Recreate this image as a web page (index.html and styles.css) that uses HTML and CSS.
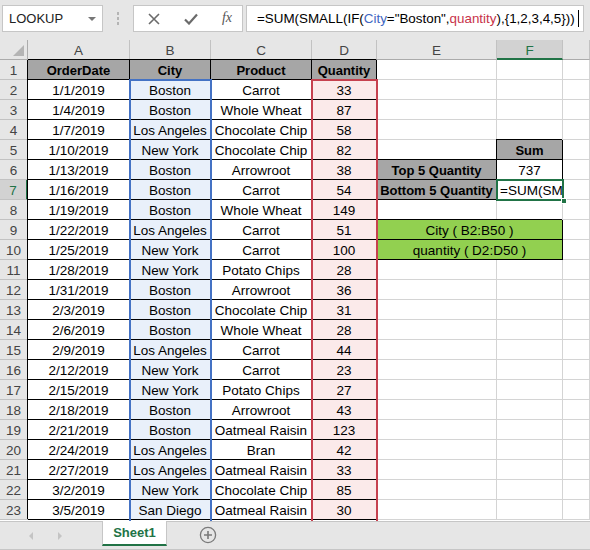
FILE: index.html
```html
<!DOCTYPE html>
<html>
<head>
<meta charset="utf-8">
<link rel="stylesheet" href="styles.css">
</head>
<body>
<div class="app">
  <div class="fbar">
    <div class="namebox"><span>LOOKUP</span><span class="dd"></span></div>
    <div class="dots"><i></i><i></i><i></i></div>
    <div class="btns">
      <svg width="12" height="12" viewBox="0 0 12 12"><path d="M1 1L11 11M11 1L1 11" stroke="#6b6b6b" stroke-width="1.6" fill="none"/></svg>
      <svg width="14" height="12" viewBox="0 0 14 12"><path d="M1 6.5L5 10.5L13 1.5" stroke="#6b6b6b" stroke-width="2.2" fill="none"/></svg>
      <span class="fx">fx</span>
    </div>
    <div class="finput">=SUM(SMALL(IF(<span class="rb">City</span>="Boston",<span class="rr">quantity</span>),{1,2,3,4,5}))<span class="caret"></span></div>
  </div>
  <div class="sheet">
    <div class="grid" id="grid"></div>
    <div class="rng blue"></div>
    <div class="rng red"></div>
    <div class="active"><span class="handle"></span></div>
  </div>
  <div class="tabs">
    <span class="arr l"></span><span class="arr r"></span>
    <div class="tab">Sheet1</div>
    <div class="plus"><svg width="18" height="18" viewBox="0 0 18 18"><circle cx="9" cy="9" r="7.6" fill="none" stroke="#7a7a7a" stroke-width="1.3"/><path d="M9 5V13M5 9H13" stroke="#7a7a7a" stroke-width="1.6"/></svg></div>
  </div>
</div>
<script src="app.js"></script>
</body>
</html>
```
FILE: app.js
```js
var data = [
["1/1/2019","Boston","Carrot","33"],
["1/4/2019","Boston","Whole Wheat","87"],
["1/7/2019","Los Angeles","Chocolate Chip","58"],
["1/10/2019","New York","Chocolate Chip","82"],
["1/13/2019","Boston","Arrowroot","38"],
["1/16/2019","Boston","Carrot","54"],
["1/19/2019","Boston","Whole Wheat","149"],
["1/22/2019","Los Angeles","Carrot","51"],
["1/25/2019","New York","Carrot","100"],
["1/28/2019","New York","Potato Chips","28"],
["1/31/2019","Boston","Arrowroot","36"],
["2/3/2019","Boston","Chocolate Chip","31"],
["2/6/2019","Boston","Whole Wheat","28"],
["2/9/2019","Los Angeles","Carrot","44"],
["2/12/2019","New York","Carrot","23"],
["2/15/2019","New York","Potato Chips","27"],
["2/18/2019","Boston","Arrowroot","43"],
["2/21/2019","Boston","Oatmeal Raisin","123"],
["2/24/2019","Los Angeles","Bran","42"],
["2/27/2019","Los Angeles","Oatmeal Raisin","33"],
["3/2/2019","New York","Chocolate Chip","85"],
["3/5/2019","San Diego","Oatmeal Raisin","30"]
];
var g = document.getElementById('grid');
function cell(txt, cls) {
  var d = document.createElement('div');
  d.className = 'c ' + (cls || '');
  d.textContent = txt || '';
  g.appendChild(d);
  return d;
}
cell('', 'corner');
['A','B','C','D','E','F',''].forEach(function (l, i) {
  cell(l, 'ch' + (i < 4 ? ' chb' : '') + (l === 'F' ? ' sel' : ''));
});
var extras = {
  5: [['', ''], ['Sum', 'b hd']],
  6: [['Top 5 Quantity', 'b hd'], ['737', 'b']],
  7: [['Bottom 5 Quantity', 'b hd'], ['=SUM(SM', 'b left']],
  9: [['City ( B2:B50 )', 'b grn span2']],
  10: [['quantity ( D2:D50 )', 'b grn span2']]
};
for (var r = 1; r <= 23; r++) {
  cell(String(r), 'rh' + (r === 7 ? ' sel' : ''));
  if (r === 1) {
    ['OrderDate','City','Product','Quantity'].forEach(function (t) { cell(t, 'b hd'); });
  } else {
    var row = data[r - 2];
    cell(row[0], 'b');
    cell(row[1], 'b bl');
    cell(row[2], 'b');
    cell(row[3], 'b pk');
  }
  if (extras[r]) {
    extras[r].forEach(function (e) { cell(e[0], e[1]); });
  } else {
    cell(''); cell('');
  }
  cell('', 'g');
}
```
FILE: styles.css
```css
* { box-sizing: border-box; }
html, body { margin: 0; padding: 0; }
body {
  width: 590px; height: 550px; overflow: hidden;
  font-family: "Liberation Sans", Arial, sans-serif;
  background: #fff;
}
.app { display: flex; flex-direction: column; height: 550px; }

.fbar {
  height: 40px; flex: none;
  background: #e6e6e6;
  display: flex; align-items: flex-start;
  padding: 5px 0 0 2px;
}
.namebox {
  width: 101px; height: 27px;
  background: #fff; border: 1px solid #c6c6c6;
  display: flex; align-items: center; justify-content: space-between;
  padding: 0 6px 0 6px;
  font-size: 13px; color: #222;
}
.dd { width: 0; height: 0; border-left: 4px solid transparent; border-right: 4px solid transparent; border-top: 4px solid #777; }
.dots { width: 30px; height: 27px; display: flex; flex-direction: column; align-items: center; justify-content: center; gap: 2px; }
.dots i { width: 2px; height: 3px; background: #b4b4b4; display: block; }
.btns {
  width: 110px; height: 27px;
  background: #fff; border: 1px solid #c6c6c6;
  display: flex; align-items: center; justify-content: space-between;
  padding: 0 10px 0 14px;
}
.fx { font-family: "Liberation Serif", serif; font-style: italic; font-size: 14px; color: #555; padding-bottom: 2px; }
.finput {
  flex: 1; margin-left: 3px; margin-right: 6px; height: 27px;
  background: #fff; border: 1px solid #c6c6c6;
  display: flex; align-items: center;
  padding-left: 10px;
  font-size: 13.4px; color: #000; white-space: nowrap; overflow: hidden;
}
.rb { color: #3f67c2; }
.rr { color: #c8334a; }
.caret { display: inline-block; flex: none; width: 1px; height: 17px; background: #000; margin-left: 3px; }

.sheet { position: relative; height: 481px; flex: none; overflow: hidden; }
.grid {
  display: grid;
  grid-template-columns: 28px 102px 81px 101px 65px 120px 66px 27px;
  grid-auto-rows: 20px;
  font-size: 13.5px;
}
.c {
  border-right: 1px solid #d4d4d4;
  border-bottom: 1px solid #d4d4d4;
  display: flex; align-items: center; justify-content: center;
  white-space: nowrap; overflow: hidden;
  color: #000;
  padding-top: 2px;
}
.corner {
  background: #e6e6e6; border-right-color: #ababab; border-bottom-color: #ababab;
  position: relative;
}
.corner::after {
  content: ""; position: absolute; right: 3px; bottom: 3px;
  width: 0; height: 0;
  border-left: 11px solid transparent; border-bottom: 11px solid #b4b4b4;
}
.ch { background: #e6e6e6; color: #444; border-right-color: #c2c2c2; border-bottom-color: #ababab; }
.chb { border-bottom-color: #555; }
.ch.sel { background: #d2d2d2; color: #217346; border-bottom: 2px solid #217346; }
.rh { background: #e6e6e6; color: #444; border-right-color: #ababab; border-bottom-color: #c2c2c2; }
.rh.sel { background: #d2d2d2; color: #217346; border-right: 2px solid #217346; }
.b {
  border-right-color: #000; border-bottom-color: #000;
  box-shadow: -1px -1px 0 #000;
}
.hd { background: #a6a6a6; font-weight: bold; font-size: 13px; }
.bl { background: #e9f0fa; }
.pk { background: #fbeaea; }
.grn { background: #92d050; }
.span2 { grid-column: span 2; }
.left { justify-content: flex-start; padding-left: 3px; }

.rng { position: absolute; top: 39px; height: 460px; border: 2px solid; border-bottom: none; pointer-events: none; }
.rng.blue { left: 129px; width: 83px; border-color: #4472c4; }
.rng.red { left: 311px; width: 67px; border-color: #c6414f; }
.active {
  position: absolute; left: 496px; top: 139px; width: 68px; height: 22px;
  border: 2px solid #217346;
}
.handle {
  position: absolute; right: -5px; bottom: -5px; width: 6px; height: 6px;
  background: #217346; border: 1px solid #fff;
}

.tabs {
  flex: 1; background: #e6e6e6;
  border-top: 1px solid #c6c6c6; border-bottom: 1px solid #c6c6c6;
  display: flex; align-items: flex-start;
  position: relative;
}
.arr { position: absolute; top: 10px; width: 0; height: 0; border-top: 4px solid transparent; border-bottom: 4px solid transparent; }
.arr.l { left: 29px; border-right: 4px solid #c4c4c4; }
.arr.r { left: 58px; border-left: 4px solid #c4c4c4; }
.tab {
  margin-left: 102px; width: 65px; height: 25px;
  background: #fff; color: #217346; font-weight: bold; font-size: 13px;
  display: flex; align-items: center; justify-content: center;
  border-bottom: 2px solid #217346;
  border-left: 1px solid #c6c6c6; border-right: 1px solid #c6c6c6;
  margin-top: -1px;
}
.plus { margin-left: 32px; margin-top: 4px; display: flex; }
```
